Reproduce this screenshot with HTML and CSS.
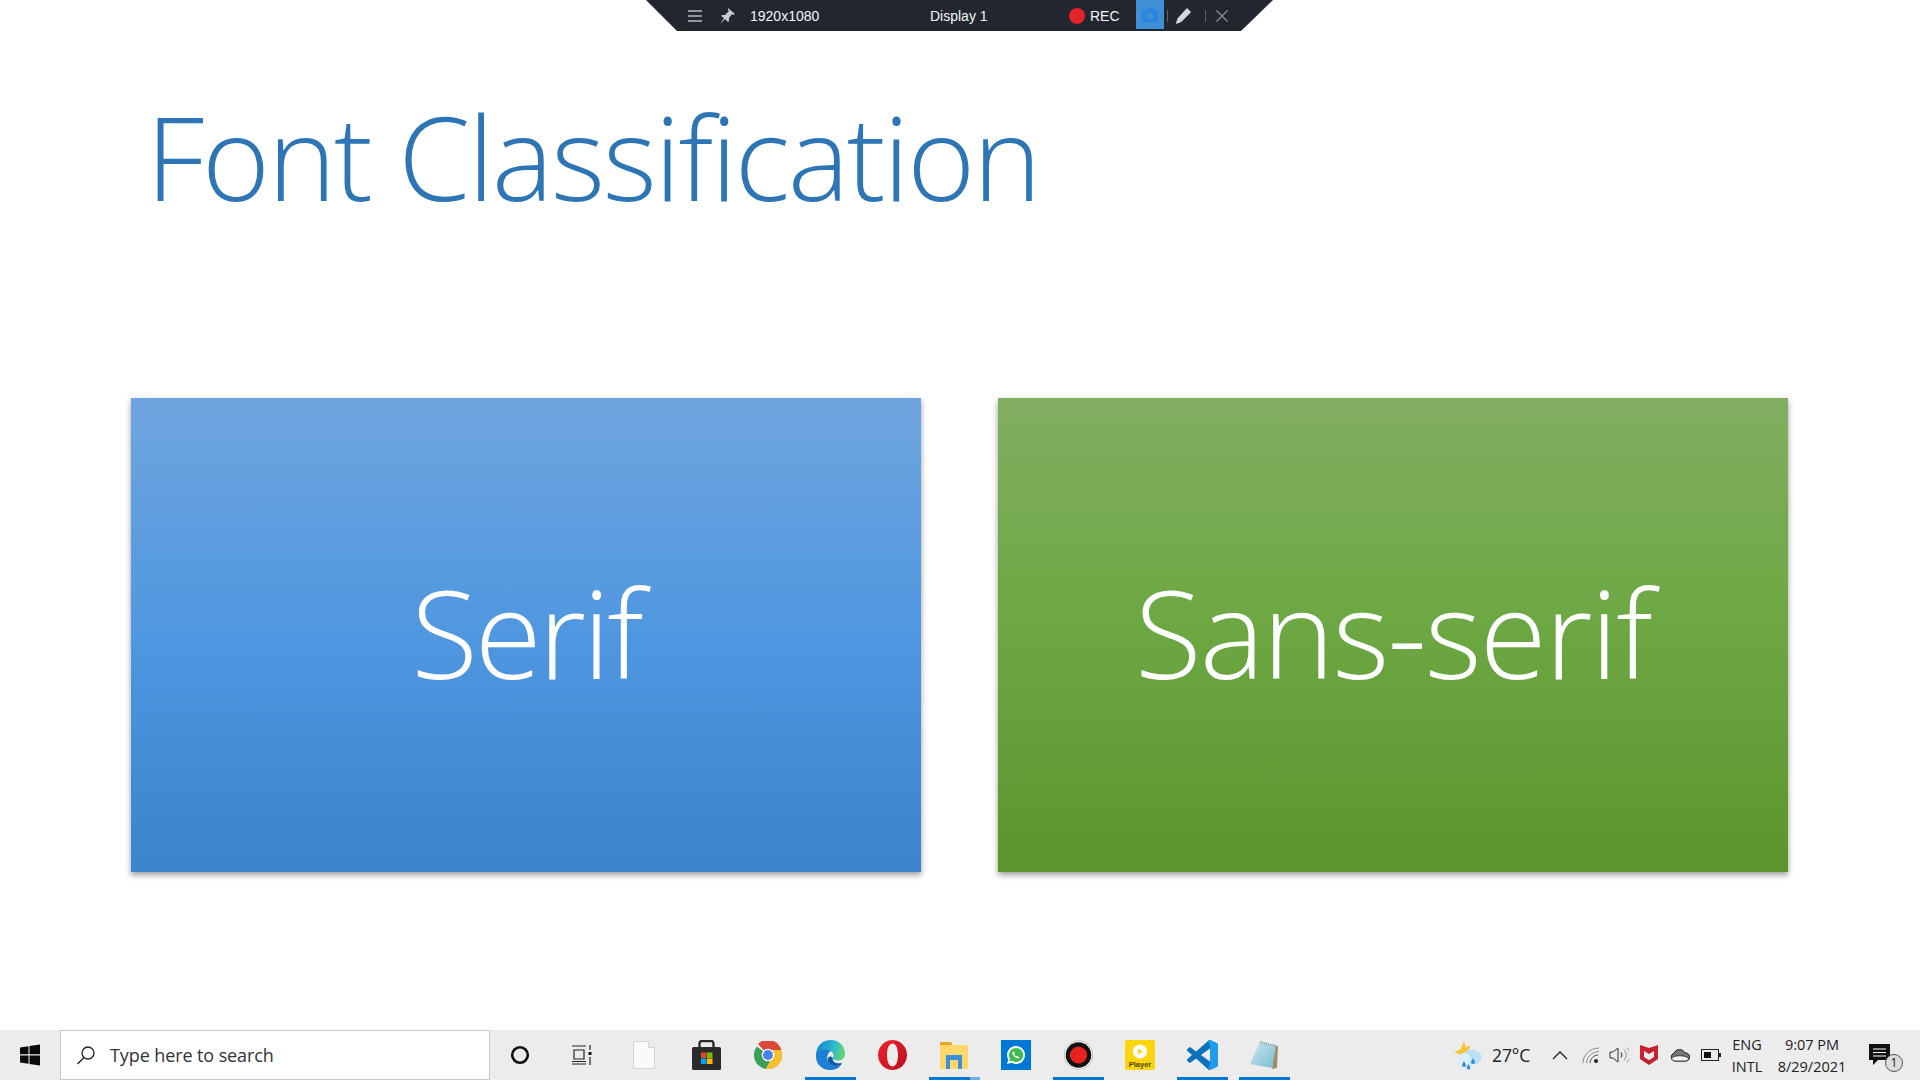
FILE: index.html
```html
<!DOCTYPE html>
<html lang="en">
<head>
<meta charset="utf-8">
<title>Font Classification</title>
<link rel="stylesheet" href="styles.css">
</head>
<body>
<div class="recbar">
  <svg class="ic-menu" width="14" height="14" viewBox="0 0 14 14"><path d="M0 2h14M0 7h14M0 12h14" stroke="#b9bcc0" stroke-width="1.3"/></svg>
  <svg class="ic-pin" width="18" height="18" viewBox="0 0 18 18"><path d="M10 1l7 6-2 1-1-1-3 4 0 3-1 1-3-3-5 5 4-6-3-2 1-1 3 0 4-4-1-1z" fill="#c8cacd"/></svg>
  <span class="rec-size">1920x1080</span>
  <span class="rec-display">Display 1</span>
  <span class="rec-dot"></span>
  <span class="rec-label">REC</span>
  <span class="rec-cam"><svg width="18" height="16" viewBox="0 0 18 16"><path d="M2 3h3l1-2h6l1 2h3a1 1 0 0 1 1 1v10a1 1 0 0 1-1 1H2a1 1 0 0 1-1-1V4a1 1 0 0 1 1-1z" fill="#2a86e0"/><circle cx="9" cy="9" r="3.4" fill="#3f8fd6"/></svg></span>
  <span class="rec-sep"></span>
  <svg class="ic-pen" width="18" height="18" viewBox="0 0 18 18"><path d="M13 1l4 4-10 10-2-2 9-9-1-1-9 9-2 5 5-2z" fill="#d5d6d8"/><path d="M12.500 1.500l4 4-9.500 9.500-5 1.500 1.500-5z" fill="#d5d6d8"/></svg>
  <span class="rec-sep rec-sep2"></span>
  <svg class="ic-x" width="12" height="12" viewBox="0 0 12 12"><path d="M.5.5l11 11M11.500.5l-11 11" stroke="#8f9297" stroke-width="1.1"/></svg>
</div>

<main class="slide">
  <h1 class="title">Font Classification</h1>
  <div class="cards">
    <div class="card card-blue"><span class="label-serif">Serif</span></div>
    <div class="card card-green"><span class="label-sans">Sans-serif</span></div>
  </div>
</main>

<footer class="taskbar">
  <div class="start">
    <svg width="22" height="22" viewBox="0 0 22 22"><path d="M1 3.500l8.500-1.200v8H1zM10.500 2.100L21 .6v9.700H10.500zM1 11.500h8.500v8.200L1 18.500zM10.500 11.500H21v9.900l-10.500-1.500z" fill="#0b0b0b"/></svg>
  </div>
  <div class="search">
    <svg width="20" height="20" viewBox="0 0 20 20"><circle cx="12" cy="8" r="6" fill="none" stroke="#222" stroke-width="1.3"/><path d="M8 12.500L1.500 19" stroke="#222" stroke-width="1.4"/></svg>
    <span class="search-text">Type here to search</span>
  </div>
  <div class="apps">
    <div class="app"><svg width="20" height="20" viewBox="0 0 20 20"><circle cx="10" cy="10" r="7.800" fill="none" stroke="#111" stroke-width="2.600"/></svg></div>
    <div class="app app-tv"><svg width="21" height="20" viewBox="0 0 21 20"><path d="M1 1h14M1 19h14M3 5h10v9H3zM1 16.500h14" fill="none" stroke="#222" stroke-width="1.200"/><path d="M19 0v5M19 12v8" stroke="#222" stroke-width="1.200"/><rect x="17.500" y="7" width="3" height="3" fill="#111"/></svg></div>
    <div class="app"><svg width="22" height="28" viewBox="0 0 22 28"><path d="M.5.500h15l6 6v21H.5z" fill="#fafafa" stroke="#d5d5d5"/><path d="M15.500.500v6h6" fill="#eee" stroke="#d5d5d5"/></svg></div>
    <div class="app"><svg width="29" height="30" viewBox="0 0 29 30"><path d="M7.500 9V3.500a2.500 2.500 0 0 1 2.500-2.500h9a2.500 2.500 0 0 1 2.500 2.500V9" fill="none" stroke="#2b2b2b" stroke-width="2.400"/><rect y="7" width="29" height="23" rx="1.500" fill="#2b2b2b"/><rect x="9" y="12.500" width="5.500" height="5.500" fill="#e2462f"/><rect x="15" y="12.500" width="5.500" height="5.500" fill="#7fb900"/><rect x="9" y="18.500" width="5.500" height="5.500" fill="#00a1ef"/><rect x="15" y="18.500" width="5.500" height="5.500" fill="#ffb900"/></svg></div>
    <div class="app"><svg width="28" height="28" viewBox="0 0 28 28"><path d="M14 14L4 2.900A14 14 0 0 1 27.500 10H14z" fill="#d9483b"/><path d="M14 14L2.800 5.600A14 14 0 0 0 12 27.900L19 14z" fill="#3a9d58"/><path d="M14 9h13.300A14 14 0 0 1 12 27.900L19 14z" fill="#f5c02e"/><circle cx="14" cy="14" r="6.300" fill="#fff"/><circle cx="14" cy="14" r="5" fill="#4b84e8"/></svg></div>
    <div class="app active"><svg width="30" height="30" viewBox="0 0 30 30"><defs><linearGradient id="edgeTop" x1="0" x2="1" y1=".3" y2=".5"><stop offset="0" stop-color="#1587cf"/><stop offset=".6" stop-color="#2fb9cf"/><stop offset="1" stop-color="#62d86f"/></linearGradient></defs><path d="M1 14C2 5 8 0 15.500 0 24 0 30 6 30 14c0 4-3 6.500-7 6.500-3 0-5-1-5.500-2.500 1.500-1.500 2-6-3.500-7.500C8 9 3 11 1 14z" fill="url(#edgeTop)"/><path d="M1 14c-1 10 6 16 14 16 5 0 9-2 11-5-5 2-11 1-13-4-2-4 0-8 3-10.500C10 9 3 10 1 14z" fill="#1b7fd4"/><path d="M13 21c2 5 8 6 13 4l1-2c-5 1-9 0-9.500-5-2-3-5.500-1-4.500 3z" fill="#0e5aa6"/></svg></div>
    <div class="app"><svg width="29" height="30" viewBox="0 0 29 30"><defs><linearGradient id="operaRed" x1="0" x2="1" y1="0" y2="1"><stop offset="0" stop-color="#f0222c"/><stop offset="1" stop-color="#b90f1e"/></linearGradient></defs><path fill-rule="evenodd" d="M14.500 0a14.500 15 0 1 0 .01 0zM14.500 3.500c3.500 0 5.500 5 5.500 11.500s-2 11.500-5.500 11.500S9 21.500 9 15s2-11.500 5.500-11.500z" fill="url(#operaRed)"/></svg></div>
    <div class="app active split"><svg width="30" height="30" viewBox="0 0 30 30"><path d="M1 2h11l2 4H1z" fill="#e7a51e"/><rect x="1" y="5" width="28" height="24" fill="#fcd769"/><path d="M7 29V15h16v14h-4v-9h-8v9z" fill="#3b8fdb"/></svg></div>
    <div class="app"><svg width="30" height="30" viewBox="0 0 30 30"><rect width="30" height="30" fill="#0078d7"/><path d="M15 6a9 9 0 0 0-7.700 13.600L6 24l4.500-1.200A9 9 0 1 0 15 6z" fill="#fff"/><path d="M15 8a7 7 0 0 0-6 10.700l-.7 2.900 3-.8A7 7 0 1 0 15 8z" fill="#3fbd4e"/><path d="M12 11.500c-1.500 1 0 4 1.500 5.200s3.500 2.500 5 .8l-2-1.500-1 .6c-1-.5-2-1.600-2.300-2.500l.7-1z" fill="#fff"/></svg></div>
    <div class="app active"><svg width="29" height="30" viewBox="0 0 29 30"><circle cx="14.500" cy="15" r="14.300" fill="#fff" stroke="#999" stroke-width=".6"/><circle cx="14.500" cy="15" r="12.800" fill="#111"/><circle cx="14.500" cy="15" r="8.600" fill="#e8221f"/></svg></div>
    <div class="app"><svg width="30" height="30" viewBox="0 0 30 30"><rect width="30" height="30" rx="1.500" fill="#fbd60e"/><circle cx="15" cy="11.500" r="7" fill="#fff"/><path d="M13 8.500l5 3-5 3z" fill="#fbd60e"/><text class="player-text" x="15" y="26.500" text-anchor="middle">Player</text></svg></div>
    <div class="app active"><svg width="31" height="30" viewBox="0 0 100 100" preserveAspectRatio="none"><path d="M96.400 10.800 75.800.9C73.400-.2 70.600.2 68.700 2.100L29.300 38.100 12.100 25.100c-1.600-1.200-3.800-1.100-5.300.3L1.300 30.400c-1.800 1.600-1.800 4.500 0 6.100L16.200 50 1.300 63.600c-1.800 1.600-1.800 4.500 0 6.100l5.500 5c1.500 1.400 3.700 1.500 5.300.3L29.300 62 68.700 98c1.900 1.900 4.700 2.400 7.100 1.200l20.600-9.900c2.200-1.100 3.600-3.300 3.600-5.700V16.500c0-2.400-1.400-4.600-3.600-5.700zM75 72.700 45.100 50 75 27.300z" fill="#0a72bd"/><path d="M75.800.9C73.400-.2 70.600.2 68.700 2.100L75 27.300v45.400L68.700 98c1.900 1.900 4.700 2.400 7.100 1.200l20.600-9.900c2.200-1.100 3.600-3.300 3.600-5.700V16.500c0-2.400-1.400-4.600-3.600-5.700z" fill="#1f9ceb"/></svg></div>
    <div class="app active"><svg width="30" height="30" viewBox="0 0 30 30"><defs><linearGradient id="notePage" x1="0" x2="1" y1="0" y2="1"><stop offset="0" stop-color="#cfe7ee"/><stop offset="1" stop-color="#76bcd2"/></linearGradient></defs><path d="M26 5l3 1.500-1 21.500-5 1z" fill="#a08c68"/><path d="M11 2L27 6 23 28 1 24z" fill="url(#notePage)"/><path d="M11 2L27 6" stroke="#8d9aa0" stroke-width="2" stroke-dasharray="1 1"/></svg></div>
  </div>
  <div class="tray">
    <div class="t-weather"><svg width="30" height="30" viewBox="0 0 30 30"><path d="M11 1l1.500 6 5-1-3 5-7 4-6-3 6-2.500z" fill="#f6c42a"/><ellipse cx="19" cy="17" rx="9.500" ry="7.500" fill="#bcdff3"/><ellipse cx="11" cy="19" rx="7" ry="6" fill="#d8eefa"/><path d="M11 21l2 4a2 2 0 1 1-4 0zM20 18l2 4a2 2 0 1 1-4 0zM15.500 24l1.700 3a1.800 1.800 0 1 1-3.400 0z" fill="#2f8fdd"/></svg></div>
    <div class="t-temp">27°C</div>
    <div class="t-caret"><svg width="16" height="9" viewBox="0 0 16 9"><path d="M1 8l7-7 7 7" fill="none" stroke="#222" stroke-width="1.300"/></svg></div>
    <div class="t-ic"><svg width="18" height="18" viewBox="0 0 18 18"><path d="M1 17C1 9 8 2 17 2M4.500 17c0-6 6-11.500 12.500-11.500" fill="none" stroke="#8a8a8a" stroke-width="1"/><path d="M8 17c0-4 4-8 8-8" fill="none" stroke="#444" stroke-width="1"/><circle cx="14" cy="15" r="2" fill="#222"/></svg></div>
    <div class="t-speaker"><svg width="20" height="18" viewBox="0 0 20 18"><path d="M1 6h3l5-4v14l-5-4H1z" fill="none" stroke="#333"/><path d="M12 6.500a4 4 0 0 1 0 5" fill="none" stroke="#333"/><path d="M15 3.500a8 8 0 0 1 0 11M18 1.500a11 11 0 0 1 0 15" fill="none" stroke="#999"/></svg></div>
    <div class="t-mcafee"><svg width="18" height="20" viewBox="0 0 18 20"><path d="M0 0l9 3 9-3v14l-9 6-9-6z" fill="#c8202f"/><path d="M4 6l5 3 5-3v6l-5 3.200L4 12z" fill="#ececec"/></svg></div>
    <div class="t-cloud"><svg width="20" height="13" viewBox="0 0 20 13"><path d="M5 12a4 4 0 0 1-1-7.800A6 6 0 0 1 15 4a4 4 0 0 1 1 8z" fill="#777" stroke="#222"/><path d="M1.500 9c3-3 13-3 17 0 0 2-1 3-3 3H5C3 12 2 11 1.500 9z" fill="#f2f2f2" stroke="#222" stroke-width=".8"/></svg></div>
    <div class="t-batt"><svg width="20" height="12" viewBox="0 0 20 12"><rect x=".5" y=".5" width="17" height="11" fill="none" stroke="#222"/><rect x="3" y="3" width="7" height="6" fill="#111"/><rect x="18" y="4" width="2" height="4" fill="#222"/></svg></div>
    <div class="t-lang"><span>ENG</span><span>INTL</span></div>
    <div class="t-clock"><span>9:07 PM</span><span>8/29/2021</span></div>
    <div class="t-notif">
      <svg width="22" height="24" viewBox="0 0 22 24"><path d="M0 1h21v16H9l-5 5v-5H0z" fill="#111"/><path d="M4 6h13M4 9.500h13M4 13h13" stroke="#fff"/></svg>
      <span class="notif-badge">1</span>
    </div>
  </div>
</footer>
</body>
</html>
```
FILE: styles.css
```css
* { box-sizing: border-box; }
html, body { margin: 0; height: 100%; }
body {
  width: 1920px;
  height: 1080px;
  overflow: hidden;
  background: #fff;
  display: flex;
  flex-direction: column;
  font-family: "Open Sans", "Noto Sans", sans-serif;
  position: relative;
}

/* floating recorder bar */
.recbar {
  position: absolute;
  top: 0;
  left: 646px;
  width: 627px;
  height: 31px;
  background: #22272f;
  clip-path: polygon(0 0, 100% 0, 595px 100%, 31px 100%);
  display: flex;
  align-items: center;
  color: #f2f5f7;
  font-family: "Liberation Sans", sans-serif;
  font-size: 14px;
}
.ic-menu { margin-left: 42px; }
.ic-pin { margin-left: 16px; }
.rec-size { margin-left: 14px; width: 72px; }
.rec-display { margin-left: 108px; width: 62px; }
.rec-dot { margin-left: 77px; width: 16px; height: 16px; border-radius: 50%; background: #e22329; }
.rec-label { margin-left: 5px; width: 33px; }
.rec-cam { margin-left: 13px; width: 28px; height: 29px; margin-bottom: 2px; background: #3f8fd6; display: flex; align-items: center; justify-content: center; }
.rec-sep { margin-left: 3px; width: 1px; height: 12px; background: #5b5f66; }
.ic-pen { margin-left: 6px; }
.rec-sep2 { margin-left: 13px; }
.ic-x { margin-left: 10px; }

/* slide */
.slide {
  flex: 1;
  padding: 81px 0 0 131px;
  min-height: 0;
}
.title {
  margin: 0 0 0 15px;
  height: 317px;
  font-size: 116px;
  line-height: 150px;
  font-weight: 300;
  color: #2e75b6;
  letter-spacing: -2.300px;
  white-space: nowrap;
  filter: blur(.5px);
}
.cards { display: flex; gap: 77px; }
.card {
  width: 790px;
  height: 474px;
  display: flex;
  align-items: center;
  justify-content: center;
  padding: 0 0 7px;
  color: #fff;
  font-size: 122px;
  font-weight: 300;
  box-shadow: 0 3px 6px rgba(0, 0, 0, .4);
}
.label-serif { letter-spacing: -3.200px; filter: blur(.5px); }
.label-sans { letter-spacing: -1.900px; filter: blur(.5px); }
.card-blue { background: linear-gradient(#6fa5de, #4f97e0 50%, #3b84cb); }
.card-green { background: linear-gradient(#82ae62, #6ea844 45%, #5c952d); }

/* taskbar */
.taskbar {
  height: 50px;
  flex: none;
  background: #ececec;
  display: flex;
  align-items: stretch;
  color: #222;
}
.start { width: 60px; display: flex; align-items: center; justify-content: center; }
.search {
  width: 430px;
  background: #fff;
  border: 1px solid #c9c9c9;
  display: flex;
  align-items: center;
  padding-left: 15px;
  gap: 14px;
}
.search-text { font-size: 18px; color: #333; letter-spacing: -.1px; }
.apps { display: flex; margin-left: -1px; }
.app {
  width: 62px;
  display: flex;
  align-items: center;
  justify-content: center;
  position: relative;
}
.app-tv { padding-right: 2px; }
.app.active::after {
  content: "";
  position: absolute;
  left: 5.500px;
  right: 5.500px;
  bottom: 0;
  height: 3px;
  background: #0078d7;
}
.app.split::after { background: linear-gradient(90deg, #0078d7 80%, #6caee5 80%); }
.player-text { font-family: "Liberation Sans", sans-serif; font-size: 7.500px; font-weight: 700; fill: #4a3f08; }
.tray { margin-left: auto; margin-right: 14px; display: flex; align-items: center; height: 100%; font-size: 15px; }
.tray > div { display: flex; align-items: center; justify-content: center; height: 100%; }
.t-weather { width: 40px; }
.tray .t-temp { width: 52px; justify-content: flex-start; padding-left: 4px; font-size: 17.500px; letter-spacing: -.1px; }
.t-caret { width: 40px; }
.t-ic { width: 22px; }
.t-speaker { width: 34px; }
.t-mcafee { width: 26px; }
.t-cloud { width: 36px; }
.t-batt { width: 26px; }
.tray .t-lang, .tray .t-clock { flex-direction: column; gap: 3px; font-size: 14.500px; line-height: 19px; }
.t-lang { width: 46px; }
.t-clock { width: 84px; }
.t-notif { width: 52px; position: relative; }
.notif-badge {
  position: absolute;
  left: 31px;
  top: 24px;
  width: 18px;
  height: 18px;
  border-radius: 50%;
  border: 1px solid #555;
  background: #ddd;
  font-size: 12px;
  line-height: 16px;
  text-align: center;
}
```
